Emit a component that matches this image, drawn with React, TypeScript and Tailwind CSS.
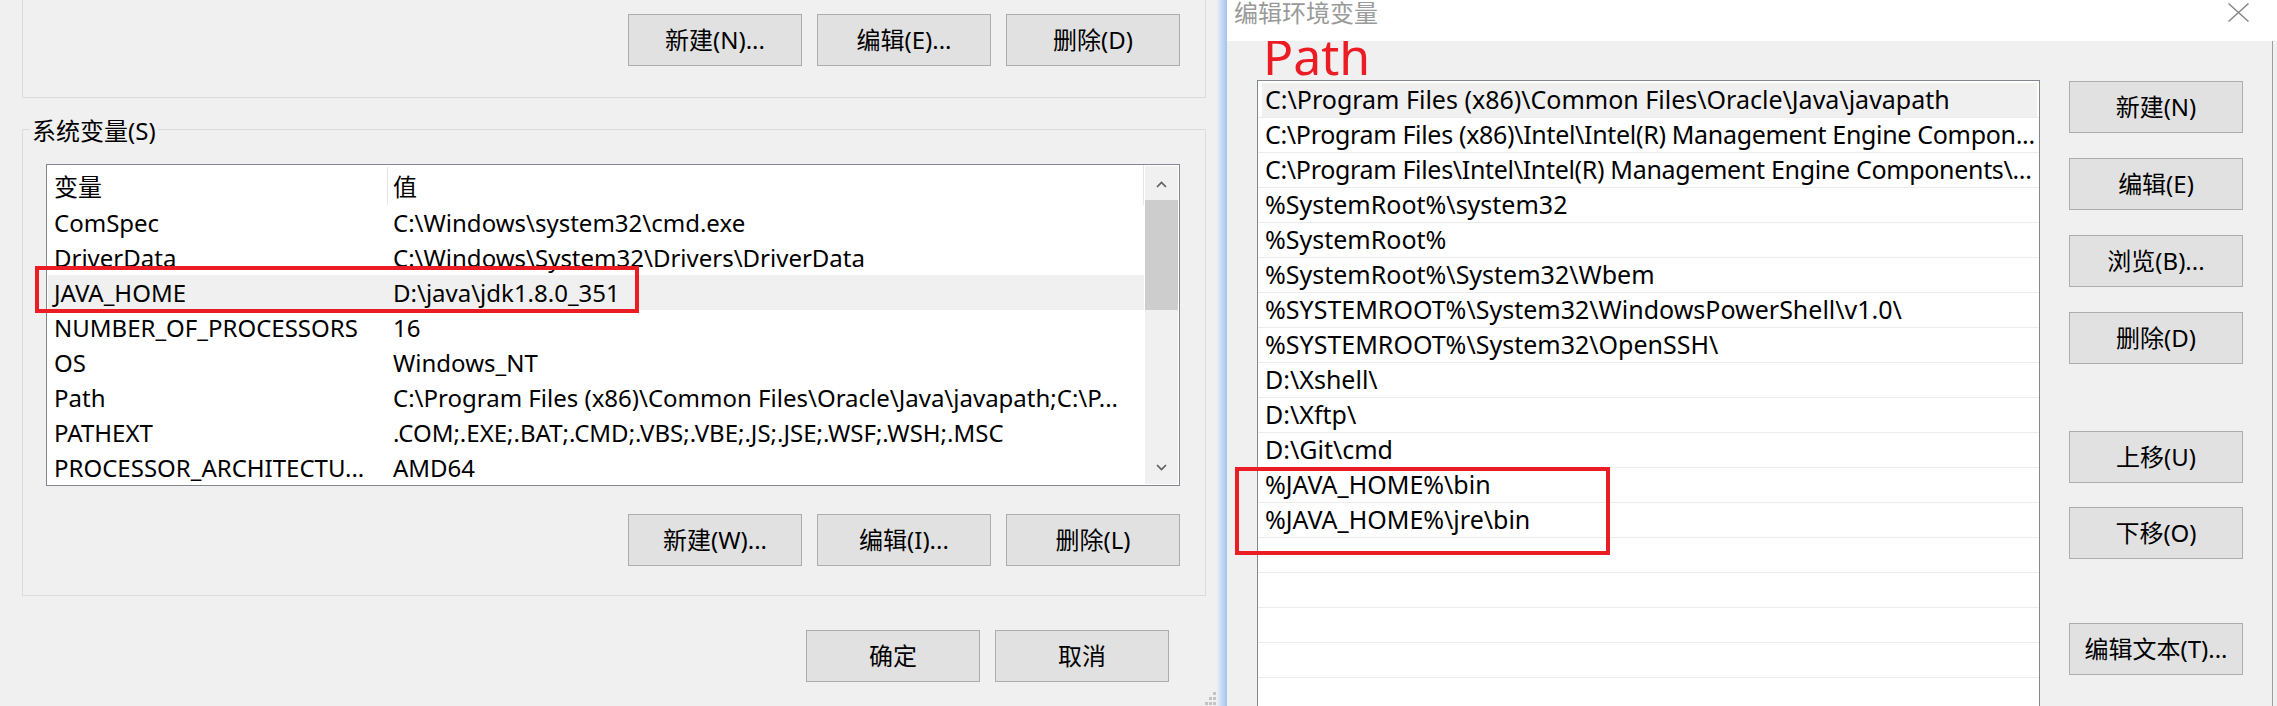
import React from "react";

const Btn = ({ children }: { children: React.ReactNode }) => (
  <div className="w-[174px] h-[52px] shrink-0 bg-[#e1e1e1] border border-[#adadad] flex items-center justify-center text-[24px] leading-none text-black whitespace-nowrap">
    {children}
  </div>
);

const sysVars: [string, string][] = [
  ["ComSpec", "C:\\Windows\\system32\\cmd.exe"],
  ["DriverData", "C:\\Windows\\System32\\Drivers\\DriverData"],
  ["JAVA_HOME", "D:\\java\\jdk1.8.0_351"],
  ["NUMBER_OF_PROCESSORS", "16"],
  ["OS", "Windows_NT"],
  ["Path", "C:\\Program Files (x86)\\Common Files\\Oracle\\Java\\javapath;C:\\P..."],
  ["PATHEXT", ".COM;.EXE;.BAT;.CMD;.VBS;.VBE;.JS;.JSE;.WSF;.WSH;.MSC"],
  ["PROCESSOR_ARCHITECTU...", "AMD64"],
];

const pathItems: string[] = [
  "C:\\Program Files (x86)\\Common Files\\Oracle\\Java\\javapath",
  "C:\\Program Files (x86)\\Intel\\Intel(R) Management Engine Compon...",
  "C:\\Program Files\\Intel\\Intel(R) Management Engine Components\\...",
  "%SystemRoot%\\system32",
  "%SystemRoot%",
  "%SystemRoot%\\System32\\Wbem",
  "%SYSTEMROOT%\\System32\\WindowsPowerShell\\v1.0\\",
  "%SYSTEMROOT%\\System32\\OpenSSH\\",
  "D:\\Xshell\\",
  "D:\\Xftp\\",
  "D:\\Git\\cmd",
  "%JAVA_HOME%\\bin",
  "%JAVA_HOME%\\jre\\bin",
  "",
  "",
  "",
  "",
  "",
];

const Chevron = ({ down }: { down?: boolean }) => (
  <svg width="11" height="7" viewBox="0 0 11 7">
    <polyline
      points={down ? "1,1 5.5,5.5 10,1" : "1,6 5.5,1.5 10,6"}
      fill="none"
      stroke="#606060"
      strokeWidth="1.7"
    />
  </svg>
);

function LeftPanel() {
  return (
    <div className="relative w-[1217px] shrink-0 h-full">
      <div className="ml-[22px] w-[1184px] h-[98px] border-x border-b border-[#dcdcdc] flex justify-end items-start gap-[15px] pt-[14px] pr-[25px]">
        <Btn>新建(N)...</Btn>
        <Btn>编辑(E)...</Btn>
        <Btn>删除(D)</Btn>
      </div>

      <fieldset className="ml-[22px] mt-[13px] w-[1184px] h-[485px] border border-[#dcdcdc]">
        <legend className="ml-[7px] px-[2px] pt-[4px] text-[24px] leading-[32px]">系统变量(S)</legend>
        <div className="ml-[23px] mt-[17px] w-[1134px] h-[322px] border border-[#828790] bg-white flex">
          <div className="w-[1098px] flex flex-col">
            <div className="h-[40px] flex shrink-0">
              <div className="w-[340px] pl-[7px] pt-[3px] flex items-center text-[24px]">变量</div>
              <div className="w-px mt-[2px] bg-[#e5e5e5]" />
              <div className="flex-1 pl-[5px] pt-[3px] flex items-center text-[24px]">值</div>
              <div className="w-px bg-[#e5e5e5]" />
              <div className="w-px" />
            </div>
            {sysVars.map(([k, v]) => (
              <div
                key={k}
                className={`h-[35px] shrink-0 flex items-center mx-px text-[24px] leading-[35px] whitespace-nowrap ${
                  k === "JAVA_HOME" ? "bg-[#f0f0f0]" : ""
                }`}
              >
                <div className="w-[339px] pl-[6px]">{k}</div>
                <div className="pl-[6px]">{v}</div>
              </div>
            ))}
          </div>
          <div className="w-[33px] my-px bg-[#f0f0f0] flex flex-col">
            <div className="h-[34px] flex items-center justify-center pt-[3px]">
              <Chevron />
            </div>
            <div className="h-[110px] bg-[#cdcdcd]" />
            <div className="flex-1" />
            <div className="h-[34px] flex items-center justify-center">
              <Chevron down />
            </div>
          </div>
        </div>
        <div className="ml-[23px] w-[1134px] mt-[28px] flex justify-end gap-[15px]">
          <Btn>新建(W)...</Btn>
          <Btn>编辑(I)...</Btn>
          <Btn>删除(L)</Btn>
        </div>
      </fieldset>

      <div className="w-[1169px] mt-[34px] flex justify-end gap-[15px]">
        <Btn>确定</Btn>
        <Btn>取消</Btn>
      </div>

      <div className="absolute left-[35px] top-[266px] w-[604px] h-[47px] border-[4px] border-[#ec1c24]" />

      <svg className="absolute right-0 bottom-0" width="14" height="16" viewBox="0 0 14 16">
        <g fill="#c3c3c3">
          <rect x="10" y="2" width="3" height="3" />
          <rect x="6" y="7" width="3" height="3" />
          <rect x="10" y="7" width="3" height="3" />
          <rect x="2" y="12" width="3" height="3" />
          <rect x="6" y="12" width="3" height="3" />
          <rect x="10" y="12" width="3" height="3" />
        </g>
      </svg>
    </div>
  );
}

function RightDialog() {
  return (
    <div className="relative flex-1 flex h-full">
      <div className="w-[10px] h-full shrink-0 bg-gradient-to-r from-[#e9eef5] to-[#a2c4ee]" />
      <div className="w-[1045px] shrink-0 h-full flex flex-col">
        <div className="h-[41px] shrink-0 bg-white flex justify-between items-start">
          <div className="pl-[7px] text-[24px] leading-[26px] text-[#9a9a9a]">编辑环境变量</div>
          <svg className="mt-[3px] mr-[23px]" width="21" height="19" viewBox="0 0 21 19">
            <line x1="0.5" y1="0.5" x2="20.5" y2="18.5" stroke="#8a8a8a" strokeWidth="1.5" />
            <line x1="20.5" y1="0.5" x2="0.5" y2="18.5" stroke="#8a8a8a" strokeWidth="1.5" />
          </svg>
        </div>
        <div className="flex-1 flex pl-[30px] pr-[29px] bg-[#f0f0f0] overflow-hidden">
          <div className="w-[783px] shrink-0 flex flex-col">
            <div className="h-[39px] shrink-0 pl-[6px] text-[50px] leading-[31px] text-[#ec1c24]">Path</div>
            <div className="h-[640px] shrink-0 border border-[#828790] bg-white pt-[2px] overflow-hidden">
              {pathItems.map((p, i) => (
                <div key={i} className="h-[35px] border-b border-[#ececec] flex">
                  <div
                    className={`flex-1 ml-[4px] mr-[2px] pl-[3px] flex items-center whitespace-nowrap overflow-hidden text-[25px] ${
                      i === 0 ? "bg-[#f0f0f0]" : ""
                    } ${i === 1 || i === 2 ? "tracking-[-0.32px]" : ""}`}
                  >
                    {p}
                  </div>
                </div>
              ))}
            </div>
          </div>
          <div className="ml-[29px] pt-[40px] flex flex-col">
            <Btn>新建(N)</Btn>
            <div className="mt-[25px]"><Btn>编辑(E)</Btn></div>
            <div className="mt-[25px]"><Btn>浏览(B)...</Btn></div>
            <div className="mt-[25px]"><Btn>删除(D)</Btn></div>
            <div className="mt-[67px]"><Btn>上移(U)</Btn></div>
            <div className="mt-[24px]"><Btn>下移(O)</Btn></div>
            <div className="mt-[64px]"><Btn>编辑文本(T)...</Btn></div>
          </div>
        </div>
      </div>
      <div className="flex-1 h-full flex flex-col">
        <div className="h-[41px] bg-white" />
        <div className="flex-1 border-l border-[#9c9c9c] bg-[#f0f0f0]" />
      </div>
      <div className="absolute left-[18px] top-[467px] w-[375px] h-[88px] border-[4px] border-[#ec1c24]" />
    </div>
  );
}

export default function App() {
  return (
    <div className="w-[2277px] h-[706px] overflow-hidden flex bg-[#f0f0f0] text-black font-[family-name:'Noto_Sans','Noto_Sans_CJK_SC',sans-serif]">
      <LeftPanel />
      <RightDialog />
    </div>
  );
}
